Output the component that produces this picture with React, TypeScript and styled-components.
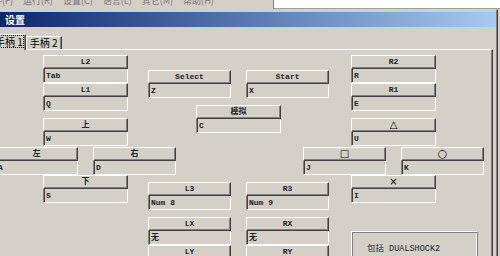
import React from "react";
import styled, { createGlobalStyle } from "styled-components";

const GlobalStyle = createGlobalStyle`
  html, body {
    margin: 0;
    padding: 0;
    background: #d4d0c8;
    overflow: hidden;
  }
  body {
    width: 500px;
    height: 256px;
    font-family: "Liberation Mono", "Noto Sans CJK SC", monospace;
  }
`;

const Screen = styled.div`
  width: 500px;
  height: 256px;
  overflow: hidden;
  background: #d4d0c8;
`;

const TopStrip = styled.div`
  display: flex;
  height: 9px;
`;

const MenuBar = styled.div`
  width: 273px;
  overflow: hidden;
  border-right: 1px solid #808080;
  background: #d4d0c8;
`;

const MenuRow = styled.div`
  display: flex;
  gap: 10px;
  margin-left: -16px;
`;

const MenuItem = styled.span`
  font-family: "Noto Sans CJK SC", sans-serif;
  font-size: 9px;
  line-height: 9px;
  margin-top: -4px;
  color: #777;
  white-space: nowrap;
`;

const OtherPane = styled.div`
  flex: 1;
  background: #fff;
  border-bottom: 1px solid #a0a0a0;
`;

const Window = styled.div`
  margin-left: -12px;
  width: 510px;
  box-sizing: border-box;
  height: 247px;
  background: #d4d0c8;
  border-top: 1px solid #d4d0c8;
  border-right: 1px solid #404040;
  padding: 2px 1px 0 4px;
  box-shadow: inset -1px 0 #808080;
`;

const TitleBar = styled.div`
  height: 15px;
  padding-left: 13px;
  background: linear-gradient(to right, #0a246a, #a6caf0);
  color: #fff;
  font-family: "Noto Sans CJK SC", sans-serif;
  font-weight: bold;
  font-size: 10px;
  line-height: 15px;
`;

const Body = styled.div`
  padding-right: 3px;
`;

const TabRow = styled.div`
  display: flex;
  align-items: flex-end;
  height: 15px;
  margin-top: 7px;
  position: relative;
  z-index: 1;
`;

const Tab = styled.div<{ $active?: boolean }>`
  box-sizing: border-box;
  height: ${(p) => (p.$active ? 16 : 13)}px;
  margin-bottom: ${(p) => (p.$active ? -1 : 0)}px;
  padding: 0 ${(p) => (p.$active ? 2 : 3)}px;
  border-top: 1px solid #fff;
  border-left: 1px solid #fff;
  border-right: 1px solid #404040;
  box-shadow: inset -1px 0 #808080;
  background: #d4d0c8;
  font-family: "Noto Sans CJK SC", sans-serif;
  font-size: 10px;
  line-height: ${(p) => (p.$active ? 13 : 12)}px;
  color: #000;
  white-space: nowrap;
`;

const FocusText = styled.span`
  display: inline-block;
  outline: 1px dotted #000;
  outline-offset: 0;
  line-height: 11px;
  margin-top: 1px;
`;

const TabPanel = styled.div`
  border-top: 1px solid #fff;
  border-left: 1px solid #fff;
  border-right: 1px solid #404040;
  box-shadow: inset -1px 0 #808080;
  padding: 5px 0 0 2px;
  height: 220px;
  display: grid;
  grid-template-columns: 153px 155px 181px;
  align-items: start;
`;

const Cluster = styled.div<{ $top?: number }>`
  display: grid;
  grid-template-columns: 48px 35px 15px 35px 48px;
  width: 181px;
  margin-top: ${(p) => p.$top ?? 0}px;
`;

const Slot = styled.div<{ $col: string; $row: number; $top?: number }>`
  grid-column: ${(p) => p.$col};
  grid-row: ${(p) => p.$row};
  margin-top: ${(p) => p.$top ?? 0}px;
  display: flex;
  flex-direction: column;
`;

const KeyButton = styled.div`
  box-sizing: border-box;
  height: 14px;
  border-top: 1px solid #fff;
  border-left: 1px solid #fff;
  border-right: 1px solid #404040;
  border-bottom: 1px solid #404040;
  box-shadow: inset -1px -1px #808080;
  background: #d4d0c8;
  text-align: center;
  font-size: 8px;
  font-weight: bold;
  line-height: 12px;
  color: #222;
  white-space: nowrap;
`;

const Glyph = styled.span<{ $size: number }>`
  font-family: "DejaVu Sans", sans-serif;
  font-weight: normal;
  font-size: ${(p) => p.$size}px;
  line-height: 12px;
  color: #000;
`;

const KeyField = styled.div`
  box-sizing: border-box;
  height: 14px;
  border-left: 1px solid #808080;
  border-right: 1px solid #fff;
  border-bottom: 1px solid #fff;
  box-shadow: inset 1px 0 #404040;
  padding-left: 2px;
  font-size: 8px;
  font-weight: bold;
  line-height: 13px;
  color: #222;
  white-space: nowrap;
  overflow: hidden;
`;

const InfoBox = styled.div`
  grid-column: 2 / span 4;
  grid-row: 6;
  box-sizing: border-box;
  width: 127px;
  height: 40px;
  margin-top: 28px;
  border: 1px solid;
  border-color: #fff #808080 #808080 #fff;
  box-shadow: inset 1px 1px #808080, inset -1px -1px #fff;
  padding: 10px 0 0 15px;
  font-size: 8.5px;
  line-height: 14px;
  color: #222;
  white-space: nowrap;
`;

type KeyProps = {
  label: React.ReactNode;
  value: string;
  col: string;
  row: number;
  top?: number;
};

const Key = ({ label, value, col, row, top }: KeyProps) => (
  <Slot $col={col} $row={row} $top={top}>
    <KeyButton>{label}</KeyButton>
    <KeyField>{value}</KeyField>
  </Slot>
);

const CENTER = "2 / span 3";
const LEFT = "1 / span 2";
const RIGHT = "4 / span 2";

export default function App() {
  return (
    <Screen>
      <GlobalStyle />
      <TopStrip>
        <MenuBar>
          <MenuRow>
            {["文件(F)", "运行(R)", "设置(C)", "语言(L)", "其它(M)", "帮助(H)"].map((m) => (
              <MenuItem key={m}>{m}</MenuItem>
            ))}
          </MenuRow>
        </MenuBar>
        <OtherPane />
      </TopStrip>
      <Window>
        <TitleBar>设置</TitleBar>
        <Body>
          <TabRow>
            <Tab $active>
              <FocusText>手柄 1</FocusText>
            </Tab>
            <Tab>手柄 2</Tab>
          </TabRow>
          <TabPanel>
            <Cluster>
              <Key label="L2" value="Tab" col={CENTER} row={1} />
              <Key label="L1" value="Q" col={CENTER} row={2} />
              <Key label="上" value="W" col={CENTER} row={3} top={7} />
              <Key label="左" value="A" col={LEFT} row={4} top={1} />
              <Key label="右" value="D" col={RIGHT} row={4} top={1} />
              <Key label="下" value="S" col={CENTER} row={5} />
            </Cluster>
            <Cluster $top={15}>
              <Key label="Select" value="Z" col={LEFT} row={1} />
              <Key label="Start" value="X" col={RIGHT} row={1} />
              <Key label="模拟" value="C" col={CENTER} row={2} top={7} />
              <Key label="L3" value="Num 8" col={LEFT} row={3} top={49} />
              <Key label="R3" value="Num 9" col={RIGHT} row={3} top={49} />
              <Key label="LX" value="无" col={LEFT} row={4} top={7} />
              <Key label="RX" value="无" col={RIGHT} row={4} top={7} />
              <Key label="LY" value="无" col={LEFT} row={5} />
              <Key label="RY" value="无" col={RIGHT} row={5} />
            </Cluster>
            <Cluster>
              <Key label="R2" value="R" col={CENTER} row={1} />
              <Key label="R1" value="E" col={CENTER} row={2} />
              <Key label={<Glyph $size={10}>△</Glyph>} value="U" col={CENTER} row={3} top={7} />
              <Key label={<Glyph $size={10}>□</Glyph>} value="J" col={LEFT} row={4} top={1} />
              <Key label={<Glyph $size={11}>○</Glyph>} value="K" col={RIGHT} row={4} top={1} />
              <Key label={<Glyph $size={10}>×</Glyph>} value="I" col={CENTER} row={5} />
              <InfoBox>包括 DUALSHOCK2</InfoBox>
            </Cluster>
          </TabPanel>
        </Body>
      </Window>
    </Screen>
  );
}
